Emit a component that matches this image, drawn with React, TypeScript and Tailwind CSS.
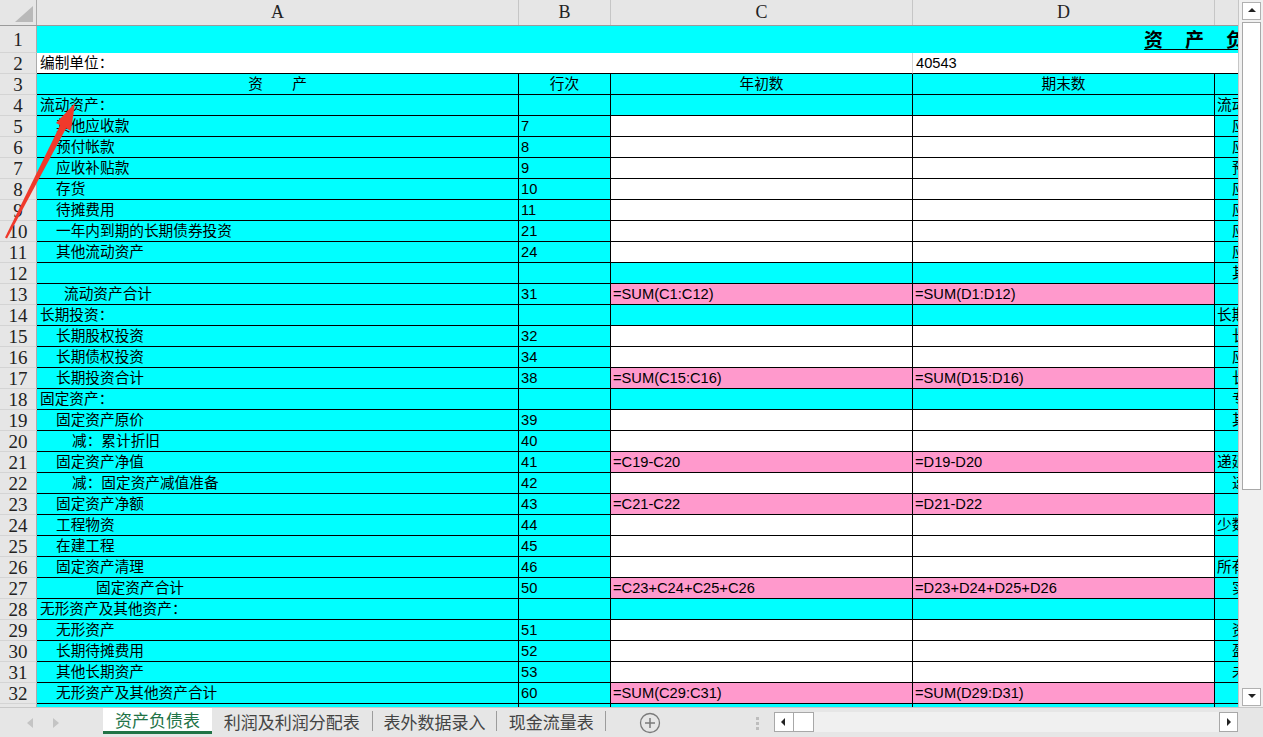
import { Fragment } from "react"

type Fill = "c" | "w" | "p"
type Row = { n: number; a: string; ind: number; b: string; fill: Fill; f?: string; e: string; eLeft?: boolean }

const rows: Row[] = [
  { n: 4, a: "流动资产：", ind: 0, b: "", fill: "c", e: "流动负债：", eLeft: true },
  { n: 5, a: "其他应收款", ind: 16, b: "7", fill: "w", e: "应付票据" },
  { n: 6, a: "预付帐款", ind: 16, b: "8", fill: "w", e: "应付账款" },
  { n: 7, a: "应收补贴款", ind: 16, b: "9", fill: "w", e: "预收账款" },
  { n: 8, a: "存货", ind: 16, b: "10", fill: "w", e: "应付工资" },
  { n: 9, a: "待摊费用", ind: 16, b: "11", fill: "w", e: "应付福利费" },
  { n: 10, a: "一年内到期的长期债券投资", ind: 16, b: "21", fill: "w", e: "应付股利" },
  { n: 11, a: "其他流动资产", ind: 16, b: "24", fill: "w", e: "应交税金" },
  { n: 12, a: "", ind: 0, b: "", fill: "c", e: "其他应交款" },
  { n: 13, a: "流动资产合计", ind: 24, b: "31", fill: "p", f: "SUM(#1:#12)", e: "" },
  { n: 14, a: "长期投资：", ind: 0, b: "", fill: "c", e: "长期负债：", eLeft: true },
  { n: 15, a: "长期股权投资", ind: 16, b: "32", fill: "w", e: "长期借款" },
  { n: 16, a: "长期债权投资", ind: 16, b: "34", fill: "w", e: "应付债券" },
  { n: 17, a: "长期投资合计", ind: 16, b: "38", fill: "p", f: "SUM(#15:#16)", e: "长期应付款" },
  { n: 18, a: "固定资产：", ind: 0, b: "", fill: "c", e: "专项应付款" },
  { n: 19, a: "固定资产原价", ind: 16, b: "39", fill: "w", e: "其他长期负债" },
  { n: 20, a: "减：累计折旧", ind: 32, b: "40", fill: "w", e: "" },
  { n: 21, a: "固定资产净值", ind: 16, b: "41", fill: "p", f: "#19-#20", e: "递延税项：", eLeft: true },
  { n: 22, a: "减：固定资产减值准备", ind: 32, b: "42", fill: "w", e: "递延税款贷项" },
  { n: 23, a: "固定资产净额", ind: 16, b: "43", fill: "p", f: "#21-#22", e: "" },
  { n: 24, a: "工程物资", ind: 16, b: "44", fill: "w", e: "少数股东权益", eLeft: true },
  { n: 25, a: "在建工程", ind: 16, b: "45", fill: "w", e: "" },
  { n: 26, a: "固定资产清理", ind: 16, b: "46", fill: "w", e: "所有者权益：", eLeft: true },
  { n: 27, a: "固定资产合计", ind: 56, b: "50", fill: "p", f: "#23+#24+#25+#26", e: "实收资本" },
  { n: 28, a: "无形资产及其他资产：", ind: 0, b: "", fill: "c", e: "" },
  { n: 29, a: "无形资产", ind: 16, b: "51", fill: "w", e: "资本公积" },
  { n: 30, a: "长期待摊费用", ind: 16, b: "52", fill: "w", e: "盈余公积" },
  { n: 31, a: "其他长期资产", ind: 16, b: "53", fill: "w", e: "未分配利润" },
  { n: 32, a: "无形资产及其他资产合计", ind: 16, b: "60", fill: "p", f: "SUM(#29:#31)", e: "" },
  { n: 33, a: "", ind: 0, b: "", fill: "c", e: "" },
]

const bg: Record<Fill, string> = { c: "bg-[#00ffff]", w: "bg-white", p: "bg-[#ff99cc]" }

const cell = "shrink-0 h-full flex items-center overflow-hidden whitespace-nowrap border-r border-b border-black"
const rh = "shrink-0 w-[37px] h-full flex items-center justify-center border-r border-b border-r-[#ababab] border-b-[#d4d4d4] bg-[#e6e6e6] font-['Liberation_Serif','DejaVu_Serif',serif] text-[19px] leading-none text-[#222]"

function RowHead({ n }: { n: number }) {
  return <div className={rh}>{n}</div>
}

function Tri({ dir }: { dir: "up" | "down" | "left" | "right" }) {
  const pts = { up: "1,6 5,2 9,6", down: "1,2 5,6 9,2", left: "6,1 2,5 6,9", right: "3,1 7,5 3,9" }[dir]
  return (
    <svg width="10" height="10" viewBox="0 0 10 10">
      <polygon points={pts} fill="#222" />
    </svg>
  )
}

export default function App() {
  return (
    <div className="relative w-[1263px] h-[737px] overflow-hidden bg-[#e6e6e6] font-['Liberation_Sans','Noto_Sans_CJK_SC',sans-serif] text-[14.67px] text-black">
      <div className="flex h-[707px]">
        {/* sheet */}
        <div className="w-[1239px] h-full overflow-hidden border-r border-[#c6c6c6] bg-white">
          {/* column headers */}
          <div className="flex h-[26px] border-b border-[#9b9b9b] bg-[#e6e6e6] font-['Liberation_Serif','DejaVu_Serif',serif] text-[18px] text-[#222]">
            <div className="shrink-0 w-[37px] h-full border-r border-[#ababab] flex items-end justify-end p-[3px]">
              <svg width="18" height="16" viewBox="0 0 18 16">
                <polygon points="18,0 18,16 0,16" fill="#b9b9b9" />
              </svg>
            </div>
            {[
              ["A", "w-[482px]"],
              ["B", "w-[92px]"],
              ["C", "w-[302px]"],
              ["D", "w-[302px]"],
              ["", "w-[24px]"],
            ].map(([l, w], i) => (
              <div key={i} className={`shrink-0 ${w} h-full border-r border-[#c6c6c6] flex items-center justify-center`}>
                {l}
              </div>
            ))}
          </div>

          {/* row 1 */}
          <div className="flex h-[27px]">
            <RowHead n={1} />
            <div className="flex-1 h-full bg-[#00ffff] overflow-hidden whitespace-nowrap pl-[1107px] pt-[2px]">
              <span className="inline-block border-b border-black font-bold text-[19px] leading-[21px] tracking-[22px] font-['Noto_Sans_CJK_SC',sans-serif]">
                资产负债表
              </span>
            </div>
          </div>

          {/* row 2 */}
          <div className="flex h-[21px]">
            <RowHead n={2} />
            <div className="shrink-0 w-[876px] h-full bg-white border-b border-black flex items-center pl-[3px] border-r border-r-[#d4d4d4]">编制单位：</div>
            <div className="flex-1 h-full bg-white border-b border-black flex items-center pl-[3px]">40543</div>
          </div>

          {/* row 3 */}
          <div className="flex h-[21px]">
            <RowHead n={3} />
            <div className={`${cell} w-[482px] bg-[#00ffff] justify-center`}>资　　产</div>
            <div className={`${cell} w-[92px] bg-[#00ffff] justify-center`}>行次</div>
            <div className={`${cell} w-[302px] bg-[#00ffff] justify-center`}>年初数</div>
            <div className={`${cell} w-[302px] bg-[#00ffff] justify-center`}>期末数</div>
            <div className={`${cell} w-[24px] bg-[#00ffff]`}></div>
          </div>

          {rows.map((r) => (
            <div key={r.n} className="flex h-[21px]">
              <RowHead n={r.n} />
              <div className={`${cell} w-[482px] bg-[#00ffff]`} style={{ paddingLeft: 3 + r.ind }}>
                {r.a}
              </div>
              <div className={`${cell} w-[92px] bg-[#00ffff] pl-[2px]`}>{r.b}</div>
              {(["C", "D"] as const).map((col) => (
                <Fragment key={col}>
                  <div className={`${cell} w-[302px] ${bg[r.fill]} pl-[2px]`}>{r.f ? "=" + r.f.replace(/#/g, col) : ""}</div>
                </Fragment>
              ))}
              <div className={`${cell} w-[24px] bg-[#00ffff] ${r.eLeft ? "pl-[2px]" : "pl-[17px]"}`}>{r.e}</div>
            </div>
          ))}
        </div>

        {/* vertical scrollbar */}
        <div className="flex-1 h-full bg-[#f0f0f0] flex flex-col items-center pt-[2px] pb-[1px] pl-[1px]">
          <div className="w-[19px] h-[18px] bg-white border border-[#b0b0b0] flex items-center justify-center">
            <Tri dir="up" />
          </div>
          <div className="w-[19px] h-[468px] mt-[2px] bg-white border border-[#a8a8a8]" />
          <div className="flex-1" />
          <div className="w-[19px] h-[18px] bg-white border border-[#b0b0b0] flex items-center justify-center">
            <Tri dir="down" />
          </div>
        </div>
      </div>

      {/* tab bar */}
      <div className="flex h-[30px] items-start border-t border-[#c8c8c8] bg-[#e6e6e6] font-['Noto_Sans_CJK_SC',sans-serif] text-[17px] text-[#444]">
        <div className="shrink-0 w-[103px] h-full flex items-center gap-[18px] pl-[26px]">
          <svg width="8" height="10" viewBox="0 0 8 10">
            <polygon points="7,0 7,10 1,5" fill="#c4c4c4" />
          </svg>
          <svg width="8" height="10" viewBox="0 0 8 10">
            <polygon points="1,0 1,10 7,5" fill="#c4c4c4" />
          </svg>
        </div>
        <div className="shrink-0 w-[109px] h-[26px] bg-white border-b-[3px] border-[#217346] text-[#217346] flex items-center justify-center leading-none">
          资产负债表
        </div>
        <div className="shrink-0 w-[394px] h-[26px] flex items-center leading-none whitespace-nowrap">
          <span className="w-[160px] text-center">利润及利润分配表</span>
          <span className="w-px h-[20px] bg-[#9c9c9c]" />
          <span className="w-[124px] text-center">表外数据录入</span>
          <span className="w-px h-[20px] bg-[#9c9c9c]" />
          <span className="w-[108px] text-center">现金流量表</span>
          <span className="w-px h-[20px] bg-[#9c9c9c]" />
        </div>
        <div className="shrink-0 w-[88px] h-[26px] flex items-center justify-center pt-[4px]">
          <svg width="22" height="22" viewBox="0 0 22 22">
            <circle cx="11" cy="11" r="9.5" fill="none" stroke="#7a7a7a" strokeWidth="1.3" />
            <path d="M11 6v10M6 11h10" stroke="#7a7a7a" strokeWidth="1.5" />
          </svg>
        </div>
        <div className="shrink-0 ml-[53px] w-[20px] h-[28px] flex flex-col items-center justify-center gap-[2px] pt-[2px]">
          <span className="w-[3px] h-[3px] bg-[#bdbdbd]" />
          <span className="w-[3px] h-[3px] bg-[#bdbdbd]" />
          <span className="w-[3px] h-[3px] bg-[#bdbdbd]" />
        </div>
        <div className="shrink-0 ml-[7px] mt-[4px] w-[464px] h-[20px] bg-[#f0f0f0] flex">
          <div className="w-[20px] h-full bg-white border border-[#a8a8a8] flex items-center justify-center">
            <Tri dir="left" />
          </div>
          <div className="w-[20px] h-full bg-white border border-[#a8a8a8] border-l-0" />
          <div className="flex-1" />
          <div className="w-[19px] h-full bg-white border border-[#a8a8a8] flex items-center justify-center">
            <Tri dir="right" />
          </div>
        </div>
      </div>

      {/* red annotation arrow */}
      <svg className="absolute left-0 top-0 pointer-events-none" width="1263" height="737" viewBox="0 0 1263 737">
        <polygon points="75,103 71,131 56,123" fill="#f0392b" />
        <polygon points="66.5,127.5 60.5,124.5 5,237.6 7,238.4" fill="#f0392b" />
      </svg>
    </div>
  )
}
